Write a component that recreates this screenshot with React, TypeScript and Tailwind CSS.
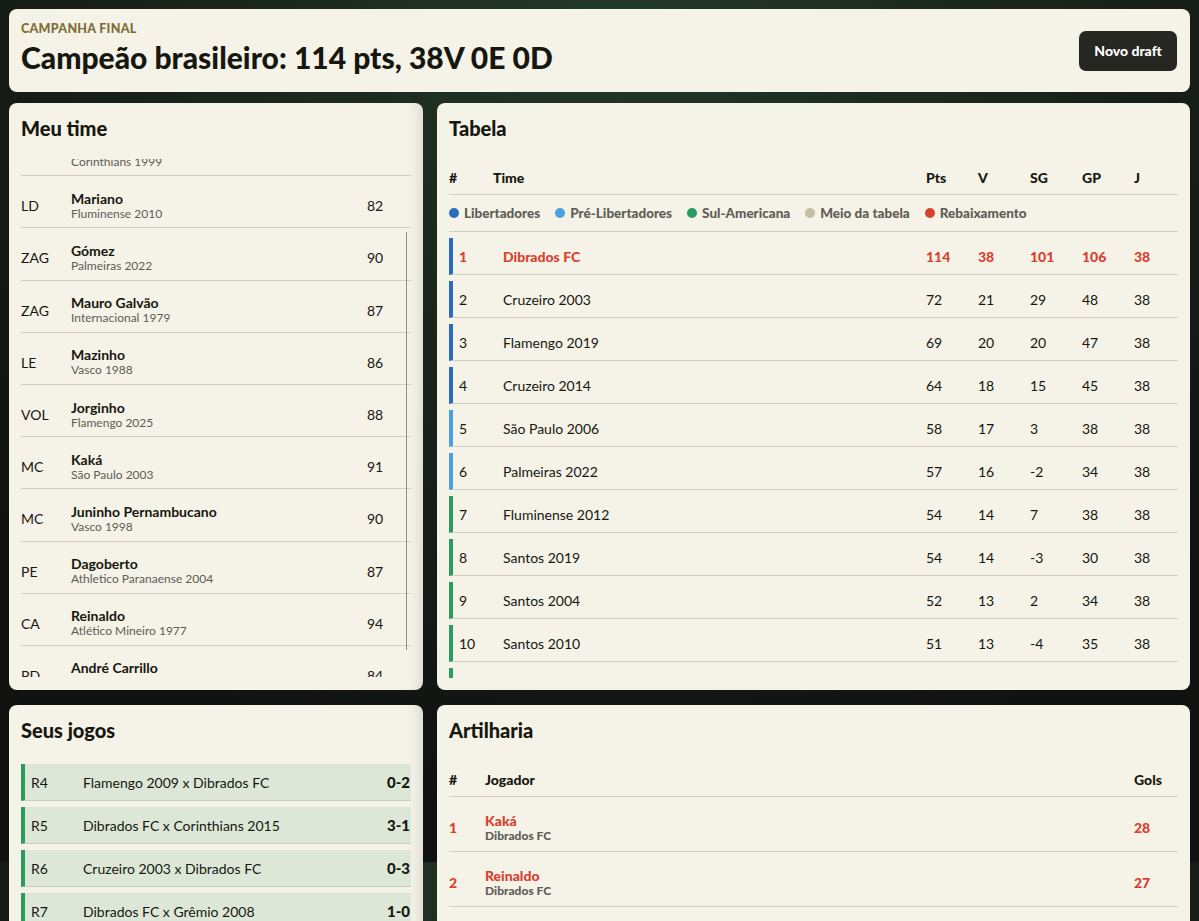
import React from "react";

const squad = [
  { pos: "GOL", name: "Dida", club: "Corinthians 1999", ovr: 89 },
  { pos: "LD", name: "Mariano", club: "Fluminense 2010", ovr: 82 },
  { pos: "ZAG", name: "Gómez", club: "Palmeiras 2022", ovr: 90 },
  { pos: "ZAG", name: "Mauro Galvão", club: "Internacional 1979", ovr: 87 },
  { pos: "LE", name: "Mazinho", club: "Vasco 1988", ovr: 86 },
  { pos: "VOL", name: "Jorginho", club: "Flamengo 2025", ovr: 88 },
  { pos: "MC", name: "Kaká", club: "São Paulo 2003", ovr: 91 },
  { pos: "MC", name: "Juninho Pernambucano", club: "Vasco 1998", ovr: 90 },
  { pos: "PE", name: "Dagoberto", club: "Athletico Paranaense 2004", ovr: 87 },
  { pos: "CA", name: "Reinaldo", club: "Atlético Mineiro 1977", ovr: 94 },
  { pos: "PD", name: "André Carrillo", club: "Sporting Cristal 2012", ovr: 84 },
];

const zoneBar: Record<string, string> = {
  lib: "border-l-[#2b6cc0]",
  pre: "border-l-[#4aa0e2]",
  sul: "border-l-[#2a9c60]",
  mid: "border-l-[#c5bca4]",
  reb: "border-l-[#d9412f]",
};

const table = [
  { n: 1, team: "Dibrados FC", pts: 114, v: 38, sg: 101, gp: 106, j: 38, zone: "lib", me: true },
  { n: 2, team: "Cruzeiro 2003", pts: 72, v: 21, sg: 29, gp: 48, j: 38, zone: "lib" },
  { n: 3, team: "Flamengo 2019", pts: 69, v: 20, sg: 20, gp: 47, j: 38, zone: "lib" },
  { n: 4, team: "Cruzeiro 2014", pts: 64, v: 18, sg: 15, gp: 45, j: 38, zone: "lib" },
  { n: 5, team: "São Paulo 2006", pts: 58, v: 17, sg: 3, gp: 38, j: 38, zone: "pre" },
  { n: 6, team: "Palmeiras 2022", pts: 57, v: 16, sg: -2, gp: 34, j: 38, zone: "pre" },
  { n: 7, team: "Fluminense 2012", pts: 54, v: 14, sg: 7, gp: 38, j: 38, zone: "sul" },
  { n: 8, team: "Santos 2019", pts: 54, v: 14, sg: -3, gp: 30, j: 38, zone: "sul" },
  { n: 9, team: "Santos 2004", pts: 52, v: 13, sg: 2, gp: 34, j: 38, zone: "sul" },
  { n: 10, team: "Santos 2010", pts: 51, v: 13, sg: -4, gp: 35, j: 38, zone: "sul" },
  { n: 11, team: "Grêmio 2008", pts: 50, v: 13, sg: 1, gp: 33, j: 38, zone: "sul" },
];

const legend = [
  { label: "Libertadores", dot: "bg-[#2b6cc0]" },
  { label: "Pré-Libertadores", dot: "bg-[#4aa0e2]" },
  { label: "Sul-Americana", dot: "bg-[#2a9c60]" },
  { label: "Meio da tabela", dot: "bg-[#c5bca4]" },
  { label: "Rebaixamento", dot: "bg-[#d9412f]" },
];

const games = [
  { r: "R4", match: "Flamengo 2009 x Dibrados FC", score: "0-2" },
  { r: "R5", match: "Dibrados FC x Corinthians 2015", score: "3-1" },
  { r: "R6", match: "Cruzeiro 2003 x Dibrados FC", score: "0-3" },
  { r: "R7", match: "Dibrados FC x Grêmio 2008", score: "1-0" },
  { r: "R8", match: "Santos 2004 x Dibrados FC", score: "1-2" },
];

const scorers = [
  { n: 1, name: "Kaká", club: "Dibrados FC", goals: 28 },
  { n: 2, name: "Reinaldo", club: "Dibrados FC", goals: 27 },
  { n: 3, name: "Dagoberto", club: "Dibrados FC", goals: 19 },
];

const card = "rounded-[8px] bg-[#f5f2e8] text-[#16170f]";

export default function App() {
  return (
    <div className="min-h-screen bg-[#101210] bg-[radial-gradient(ellipse_70%_95%_at_52%_0%,#22392a_0%,#1a261c_45%,#101210_100%)] bg-[length:100%_862px] bg-repeat-y px-[9px] pt-[9px] pb-6 font-['Lato','Noto_Sans',sans-serif]">
      {/* header */}
      <div className={`${card} flex items-start justify-between pl-[12px] pr-[13px] pt-[13px] h-[83px]`}>
        <div>
          <div className="text-[12.5px] font-black tracking-[0.3px] text-[#7d6c33] leading-[14px]">CAMPANHA FINAL</div>
          <h1 className="text-[30px] font-black leading-[36px] mt-[3px]">Campeão brasileiro: 114 pts, 38V 0E 0D</h1>
        </div>
        <button className="self-center -mt-[13px] h-[40px] w-[98px] rounded-[7px] bg-[#262720] text-white text-[14px] font-black">Novo draft</button>
      </div>

      <div className="grid grid-cols-[414px_1fr] gap-x-[14px] gap-y-[15px] mt-[11px]">
        {/* Meu time */}
        <div className={`${card} h-[587px] flex flex-col px-[12px] pt-[12px] pb-[13px] shadow-[inset_-14px_0_12px_-10px_rgba(0,0,0,0.10)]`}>
          <h2 className="text-[20px] font-black leading-[26px]">Meu time</h2>
          <div className="relative mt-[18px] flex-1 overflow-hidden">
            <div className="-mt-[35px]">
              {squad.map((p, i) => (
                <div key={i} className="grid grid-cols-[50px_1fr_44px] items-center h-[52.2px] pt-[8px] border-b border-[#d3cfc3]">
                  <span className="text-[14px]">{p.pos}</span>
                  <div>
                    <div className="text-[14px] font-bold leading-[16px]">{p.name}</div>
                    <div className="text-[12px] text-[#5e5c55] leading-[14px]">{p.club}</div>
                  </div>
                  <span className="text-[14px]">{p.ovr}</span>
                </div>
              ))}
            </div>
            <div className="absolute right-[4px] top-[73px] h-[418px] w-px bg-[#8f8c82]" />
          </div>
        </div>

        {/* Tabela */}
        <div className={`${card} h-[587px] flex flex-col px-[12px] pt-[12px] pb-[12px]`}>
          <h2 className="text-[20px] font-black leading-[26px]">Tabela</h2>
          <div className="mt-[20px] flex-1 overflow-hidden">
            <div className="grid grid-cols-[44px_1fr_52px_52px_52px_52px_44px] items-center h-[34px] border-b border-[#d3cfc3] text-[14px] font-black">
              <span>#</span>
              <span>Time</span>
              <span>Pts</span>
              <span>V</span>
              <span>SG</span>
              <span>GP</span>
              <span>J</span>
            </div>
            <div className="flex items-center gap-[15px] h-[37px] border-b border-[#d3cfc3]">
              {legend.map((l) => (
                <div key={l.label} className="flex items-center gap-[5px]">
                  <span className={`h-[10px] w-[10px] rounded-full ${l.dot}`} />
                  <span className="text-[13.5px] font-black text-[#5f5d55]">{l.label}</span>
                </div>
              ))}
            </div>
            {table.map((t) => (
              <div
                key={t.n}
                className={`grid grid-cols-[44px_1fr_52px_52px_52px_52px_44px] items-center mt-[6px] h-[37px] border-b border-b-[#d3cfc3] border-l-[4px] pl-[6px] text-[14px] ${zoneBar[t.zone]} ${t.me ? "text-[#d9412f] font-black" : ""}`}
              >
                <span>{t.n}</span>
                <span>{t.team}</span>
                <span>{t.pts}</span>
                <span>{t.v}</span>
                <span>{t.sg}</span>
                <span>{t.gp}</span>
                <span>{t.j}</span>
              </div>
            ))}
          </div>
        </div>

        {/* Seus jogos */}
        <div className={`${card} px-[12px] pt-[12px] pb-[12px] shadow-[inset_-14px_0_12px_-10px_rgba(0,0,0,0.10)]`}>
          <h2 className="text-[20px] font-black leading-[26px]">Seus jogos</h2>
          <div className="mt-[21px] flex flex-col gap-[6px]">
            {games.map((g) => (
              <div key={g.r} className="grid grid-cols-[52px_1fr_auto] items-center h-[37px] border-l-[4px] border-l-[#2a9c60] border-b border-b-[#c5cdbf] bg-[#dde7d8] pl-[6px] pr-px text-[14px]">
                <span>{g.r}</span>
                <span>{g.match}</span>
                <span className="text-[15px] font-black">{g.score}</span>
              </div>
            ))}
          </div>
        </div>

        {/* Artilharia */}
        <div className={`${card} px-[12px] pt-[12px] pb-[12px]`}>
          <h2 className="text-[20px] font-black leading-[26px]">Artilharia</h2>
          <div className="mt-[20px]">
            <div className="grid grid-cols-[36px_1fr_44px] items-center h-[34px] border-b border-[#d3cfc3] text-[14px] font-black">
              <span>#</span>
              <span>Jogador</span>
              <span>Gols</span>
            </div>
            {scorers.map((s) => (
              <div key={s.n} className="grid grid-cols-[36px_1fr_44px] items-center h-[55px] pt-[7px] border-b border-[#d3cfc3]">
                <span className="text-[14px] font-black text-[#d9412f]">{s.n}</span>
                <div>
                  <div className="text-[14px] font-black text-[#d9412f] leading-[16px]">{s.name}</div>
                  <div className="text-[12px] font-black text-[#5f5d55] leading-[14px]">{s.club}</div>
                </div>
                <span className="text-[14px] font-black text-[#d9412f]">{s.goals}</span>
              </div>
            ))}
          </div>
        </div>
      </div>
    </div>
  );
}
